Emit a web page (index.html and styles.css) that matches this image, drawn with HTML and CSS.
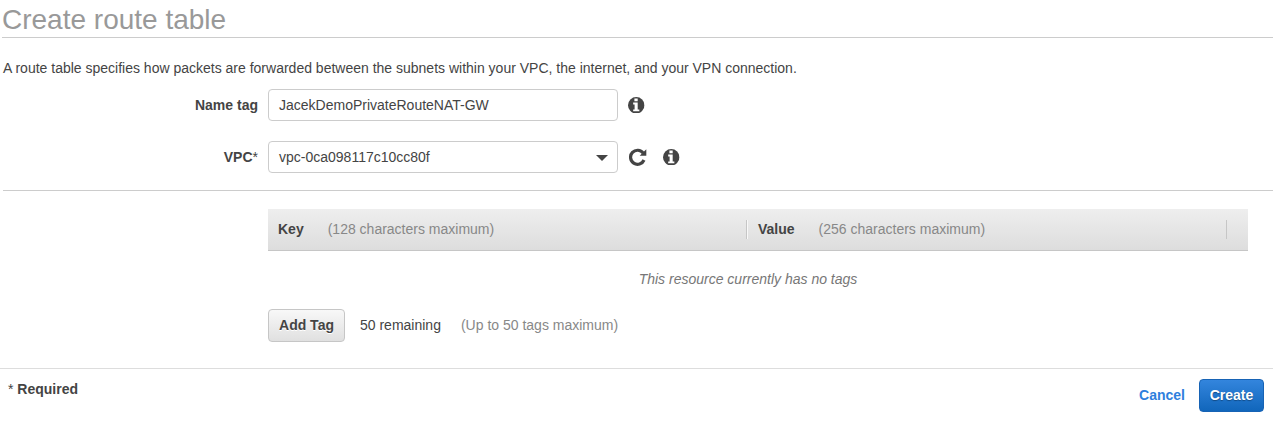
FILE: index.html
```html
<!DOCTYPE html>
<html lang="en">
<head>
<meta charset="utf-8">
<title>Create route table</title>
<link rel="stylesheet" href="styles.css">
</head>
<body>
<svg width="0" height="0" class="defs">
  <symbol id="info" viewBox="0 0 16 16">
    <circle cx="8" cy="8" r="8" fill="#444"/>
    <path d="M6.2 1.4h3.2v2.6H6.2zM5 5.4h4.4v6.6H11v1.9H5v-1.9h1.4V7.3H5z" fill="#fff"/>
  </symbol>
</svg>
<main class="page">
  <h1 class="title">Create route table</h1>
  <p class="intro">A route table specifies how packets are forwarded between the subnets within your VPC, the internet, and your VPN connection.</p>
  <form class="form">
    <div class="row">
      <label class="label">Name tag</label>
      <div class="field name-value">JacekDemoPrivateRouteNAT-GW</div>
      <svg class="icon"><use href="#info"/></svg>
    </div>
    <div class="row">
      <label class="label">VPC<span class="star">*</span></label>
      <div class="field">vpc-0ca098117c10cc80f
        <svg class="caret" viewBox="0 0 12 6"><path d="M0 0h12L6 6z" fill="#444"/></svg>
      </div>
      <svg class="icon refresh" viewBox="0 0 18 18"><path d="M14.2 5.1A7 7 0 1 0 15 12" fill="none" stroke="#444" stroke-width="3.2"/><path d="M17.3 1.2v6.6h-6.6z" fill="#444"/></svg>
      <svg class="icon"><use href="#info"/></svg>
    </div>
  </form>
  <section class="tags">
    <div class="head">
      <div class="col"><b class="key">Key</b><span class="hint">(128 characters maximum)</span></div>
      <div class="col"><b class="value">Value</b><span class="hint">(256 characters maximum)</span></div>
    </div>
    <p class="empty">This resource currently has no tags</p>
    <div class="add">
      <button class="btn">Add Tag</button>
      <span class="remaining">50 remaining</span>
      <span class="hint">(Up to 50 tags maximum)</span>
    </div>
  </section>
  <footer class="footer">
    <div class="required"><span class="star">*</span> Required</div>
    <div class="actions"><a class="cancel">Cancel</a><button class="btn primary">Create</button></div>
  </footer>
</main>
</body>
</html>
```
FILE: styles.css
```css
* { box-sizing: border-box; }
body {
  margin: 0;
  background: #fff;
  color: #444;
  font: 14px/20px "Liberation Sans", Arial, sans-serif;
}
.defs { display: block; }
.page { width: 1273px; }
.title {
  margin: 0 0 0 2px;
  height: 38px;
  border-bottom: 1px solid #ccc;
  color: #999;
  font-size: 28px;
  font-weight: normal;
  line-height: 40px;
}
.intro { margin: 20px 0 0 3px; white-space: nowrap; }
.form {
  margin: 0 0 0 3px;
  padding: 11px 0 17px;
  border-bottom: 1px solid #ccc;
  display: flex;
  flex-direction: column;
  gap: 20px;
}
.row { display: flex; align-items: center; height: 32px; }
.label { width: 255px; margin-right: 10px; text-align: right; font-weight: bold; }
.star { font-weight: normal; }
.field {
  display: flex;
  align-items: center;
  justify-content: space-between;
  width: 350px;
  height: 32px;
  padding: 0 9px 0 10px;
  border: 1px solid #ccc;
  border-radius: 4px;
}
.caret { width: 12px; height: 6px; margin-top: 2px; }
.icon { width: 16.5px; height: 16.5px; margin-left: 10px; }
.refresh { width: 18px; height: 18px; margin-left: 11px; margin-right: 6px; }
.tags { margin: 18px 0 0 268px; width: 980px; }
.head {
  display: flex;
  height: 42px;
  padding: 11px 0 10px;
  border-bottom: 1px solid #c6c6c6;
  background: linear-gradient(#eee, #ddd);
}
.col {
  width: 479px;
  height: 19px;
  padding-left: 10px;
  border-right: 1px solid #c6c6c6;
  box-shadow: 1px 0 #f8f8f8;
  line-height: 18px;
}
.col + .col { width: 480px; padding-left: 11px; box-shadow: none; }
.key, .value { margin-right: 24px; }
.hint { color: #888; }
.empty { margin: 18px 0 20px; padding-right: 20px; text-align: center; font-style: italic; color: #777; }
.add { display: flex; align-items: flex-start; line-height: 32px; }
.btn {
  width: 77px;
  height: 33px;
  padding: 0 0 1px;
  border: 1px solid #c6c6c6;
  border-radius: 4px;
  background: linear-gradient(#f8f8f8, #e0e0e0);
  color: #444;
  font: bold 14px/20px "Liberation Sans", Arial, sans-serif;
  text-shadow: 0 1px #fff;
}
.remaining { margin: 0 20px 0 15px; }
.footer {
  display: flex;
  justify-content: space-between;
  margin-top: 26px;
  padding: 10px 9px 0 8px;
  border-top: 1px solid #ddd;
  font-weight: bold;
}
.actions { display: flex; align-items: flex-start; gap: 14px; line-height: 32px; }
.cancel { color: #2e80dd; }
.primary {
  width: 65px;
  border-color: #1763b5;
  background: linear-gradient(#3385dd, #1166bb);
  color: #fff;
  text-shadow: 0 1px 1px #124b86;
}
```
